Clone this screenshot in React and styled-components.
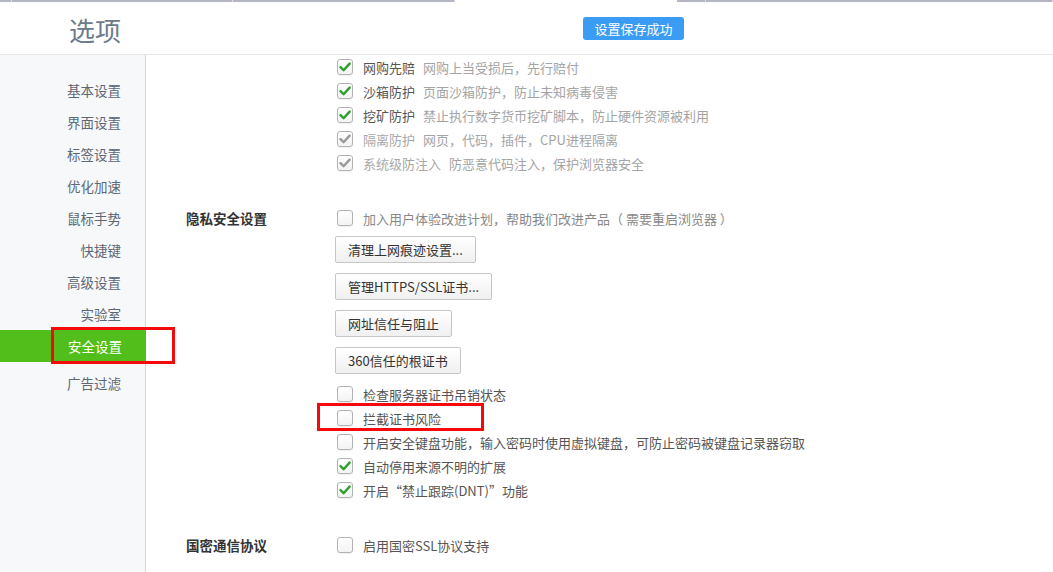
import styled, { createGlobalStyle } from 'styled-components'

const GlobalStyle = createGlobalStyle`
	html, body {
		margin: 0;
		padding: 0;
		background: #fff;
		overflow: hidden;
	}
	* { box-sizing: border-box; }
	body {
		font-family: "Noto Sans CJK SC", "Noto Sans", sans-serif;
	}
`

const navItems = ['基本设置', '界面设置', '标签设置', '优化加速', '鼠标手势', '快捷键', '高级设置', '实验室', '安全设置', '广告过滤']

const protections = [
	{ label: '网购先赔', desc: '网购上当受损后，先行赔付' },
	{ label: '沙箱防护', desc: '页面沙箱防护，防止未知病毒侵害' },
	{ label: '挖矿防护', desc: '禁止执行数字货币挖矿脚本，防止硬件资源被利用' },
	{ label: '隔离防护', desc: '网页，代码，插件，CPU进程隔离', disabled: true },
	{ label: '系统级防注入', desc: '防恶意代码注入，保护浏览器安全', disabled: true },
]

const certOptions = [
	{ label: '检查服务器证书吊销状态' },
	{ label: '拦截证书风险', marked: true },
	{ label: '开启安全键盘功能，输入密码时使用虚拟键盘，可防止密码被键盘记录器窃取' },
	{ label: '自动停用来源不明的扩展', checked: true },
	{ label: '开启“禁止跟踪(DNT)”功能', checked: true },
]

const Check = ({ checked, disabled }) => (
	<Box>
		{checked && (
			<svg width="12" height="10" viewBox="0 0 12 10">
				<path d="M1.5 5.2 L4.6 8.2 L10.6 1.6" fill="none" stroke={disabled ? '#9a9a9a' : '#2e9e2e'} strokeWidth="2.4" strokeLinecap="round" strokeLinejoin="round" />
			</svg>
		)}
	</Box>
)

export default function App() {
	return (
		<>
			<GlobalStyle />
			<Page>
				<TabStrip>
					<TabEdge $w={12} />
					<TabEdge $w={221} />
					<TabEdge $w={222} />
					<TabGap />
					<TabEdge $w={29} />
					<TabEdge $w={347} />
				</TabStrip>
				<Header>
					<Title>选项</Title>
					<Toast>设置保存成功</Toast>
				</Header>
				<Body>
					<Sidebar>
						{navItems.map((item) => (
							<NavItem key={item} $active={item === '安全设置'}>
								{item}
								{item === '安全设置' && <NavMark />}
							</NavItem>
						))}
					</Sidebar>
					<Content>
						<Section $first>
							<SectionLabel />
							<Options>
								{protections.map((p) => (
									<Row key={p.label}>
										<Check checked disabled={p.disabled} />
										<RowLabel $muted={p.disabled}>{p.label}</RowLabel>
										<RowDesc>{p.desc}</RowDesc>
									</Row>
								))}
							</Options>
						</Section>
						<Section>
							<SectionLabel>隐私安全设置</SectionLabel>
							<Options>
								<Row>
									<Check />
									<RowDesc $dark>加入用户体验改进计划，帮助我们改进产品（ 需要重启浏览器 ）</RowDesc>
								</Row>
								<ButtonStack>
									<Button>清理上网痕迹设置...</Button>
									<Button>管理HTTPS/SSL证书...</Button>
									<Button>网址信任与阻止</Button>
									<Button>360信任的根证书</Button>
								</ButtonStack>
								{certOptions.map((o) => (
									<Row key={o.label}>
										<Check checked={o.checked} />
										<RowLabel>{o.label}</RowLabel>
										{o.marked && <RowMark />}
									</Row>
								))}
							</Options>
						</Section>
						<Section $gap={31}>
							<SectionLabel>国密通信协议</SectionLabel>
							<Options>
								<Row>
									<Check />
									<RowLabel>启用国密SSL协议支持</RowLabel>
								</Row>
							</Options>
						</Section>
					</Content>
				</Body>
			</Page>
		</>
	)
}

const Page = styled.div`
	height: 100vh;
	display: flex;
	flex-direction: column;
	background: #fff;
`

const TabStrip = styled.div`
	display: flex;
	height: 3px;
	border-bottom: 1px solid #fff;
`

const TabEdge = styled.div`
	width: ${(p) => p.$w}px;
	height: 2px;
	background: #b3b6c2;
	border-right: 1px solid #d8dae0;
`

const TabGap = styled.div`
	width: 222px;
`

const Header = styled.header`
	display: grid;
	grid-template-columns: 583px auto;
	align-items: center;
	height: 52px;
	border-bottom: 1px solid #e6e6e6;
`

const Title = styled.h1`
	margin: 0;
	padding-left: 69px;
	padding-top: 3px;
	font-size: 26px;
	font-weight: 400;
	line-height: 30px;
	color: #6b7b8c;
`

const Toast = styled.div`
	justify-self: start;
	width: 101px;
	height: 23px;
	line-height: 23px;
	text-align: center;
	font-size: 13px;
	color: #fff;
	background: #3b9cf4;
	border-radius: 3px;
`

const Body = styled.div`
	flex: 1;
	display: flex;
	min-height: 0;
`

const Sidebar = styled.nav`
	width: 146px;
	flex-shrink: 0;
	padding-top: 19px;
	background: #f7f8fa;
	border-right: 1px solid #d6d6d6;
	position: relative;
	z-index: 2;
`

const NavItem = styled.div`
	position: relative;
	height: 32px;
	line-height: 32px;
	padding-right: 24px;
	text-align: right;
	font-size: 13.5px;
	color: ${(p) => (p.$active ? '#fff' : '#5e6875')};
	background: ${(p) => (p.$active ? '#52be1b' : 'transparent')};
	margin-bottom: ${(p) => (p.$active ? '5px' : '0')};
	margin-right: ${(p) => (p.$active ? '-1px' : '0')};
`

const NavMark = styled.span`
	position: absolute;
	left: 51px;
	top: -3px;
	width: 124px;
	height: 37px;
	border: 3px solid #f40a0a;
`

const Content = styled.main`
	flex: 1;
`

const Section = styled.section`
	display: flex;
	margin-top: ${(p) => (p.$first ? 0 : p.$gap || 31)}px;
`

const SectionLabel = styled.div`
	width: 191px;
	flex-shrink: 0;
	padding-left: 40px;
	height: 24px;
	line-height: 24px;
	font-size: 13.5px;
	font-weight: 700;
	color: #333;
`

const Options = styled.div`
	display: flex;
	flex-direction: column;
`

const Row = styled.div`
	position: relative;
	display: flex;
	align-items: center;
	height: 24px;
	font-size: 13px;
`

const RowMark = styled.span`
	position: absolute;
	left: -20px;
	top: -3px;
	width: 167px;
	height: 28px;
	border: 3px solid #f40a0a;
`

const Box = styled.span`
	width: 16px;
	height: 16px;
	margin-right: 10px;
	display: flex;
	align-items: center;
	justify-content: center;
	border: 1px solid #b3b3b3;
	border-radius: 3px;
	background: linear-gradient(#fff, #f3f3f3);
	box-shadow: 0 1px 1px rgba(0, 0, 0, 0.06);
	flex-shrink: 0;
`

const RowLabel = styled.span`
	color: ${(p) => (p.$muted ? '#a8a8a8' : '#555')};
	margin-right: 8px;
	white-space: nowrap;
`

const RowDesc = styled.span`
	color: ${(p) => (p.$dark ? '#888' : '#a4a4a4')};
	white-space: nowrap;
`

const ButtonStack = styled.div`
	display: flex;
	flex-direction: column;
	align-items: flex-start;
	gap: 10px;
	margin: 6px 0 8px -2px;
`

const Button = styled.button`
	height: 27px;
	padding: 0 12px;
	font-family: inherit;
	font-size: 13px;
	color: #333;
	background: linear-gradient(#ffffff, #f0f0f0);
	border: 1px solid #c6c6c6;
	border-radius: 2px;
	cursor: pointer;
`
